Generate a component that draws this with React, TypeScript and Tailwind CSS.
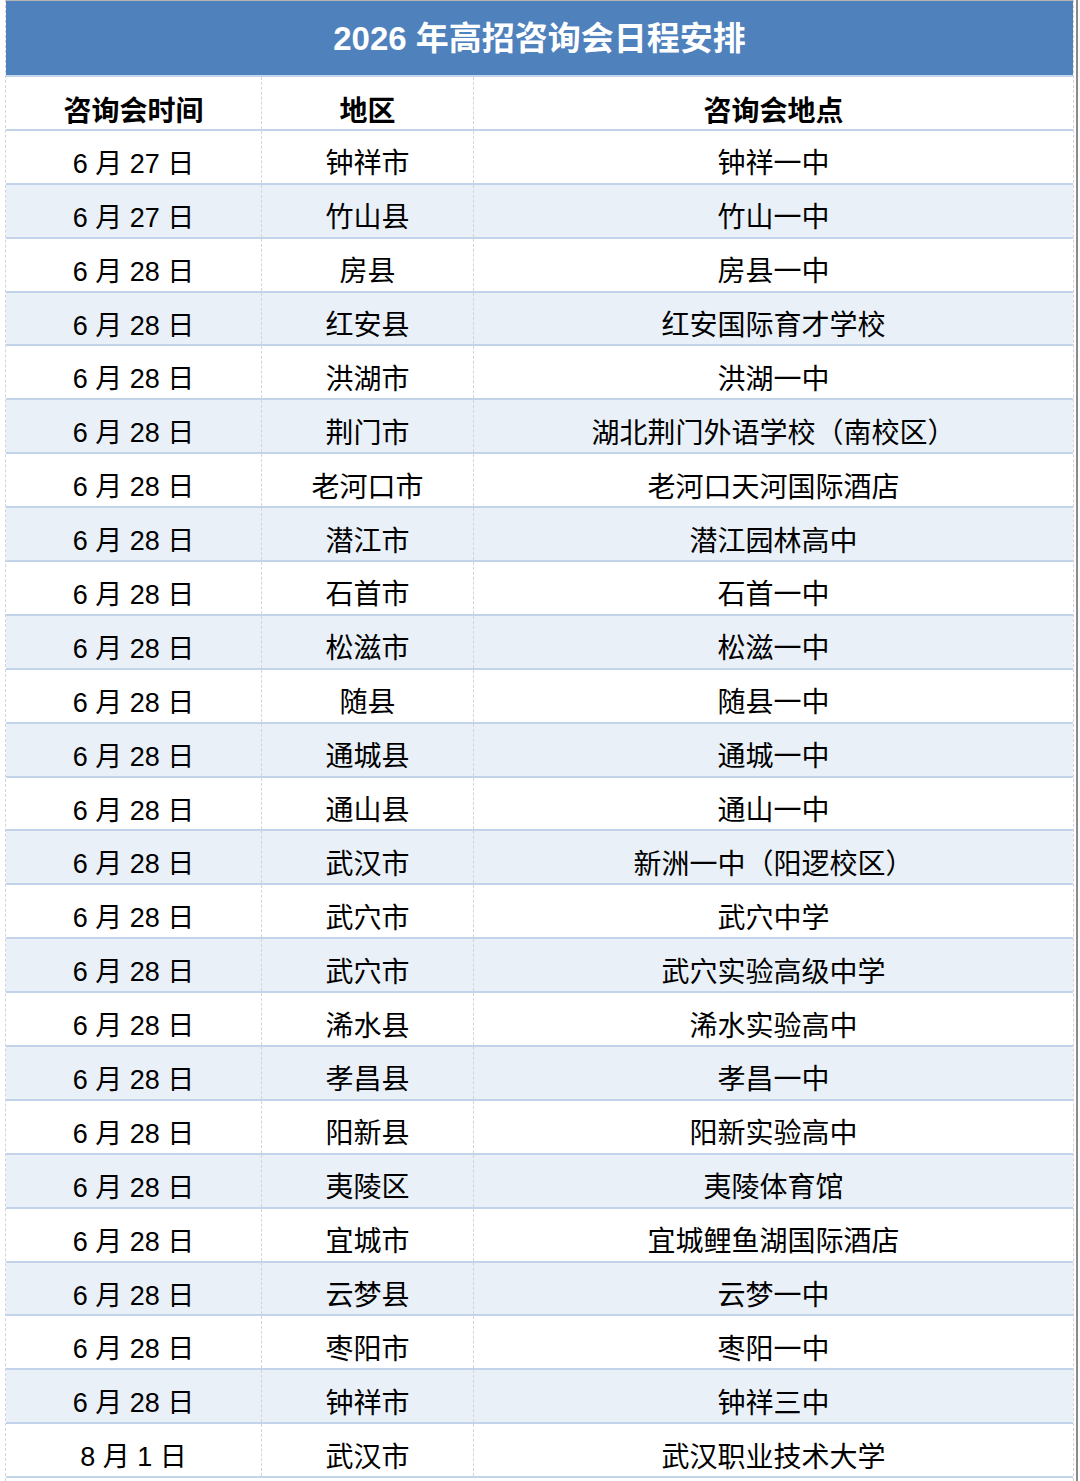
const rows: [string, string, string][] = [
  ['6 月 27 日', '钟祥市', '钟祥一中'],
  ['6 月 27 日', '竹山县', '竹山一中'],
  ['6 月 28 日', '房县', '房县一中'],
  ['6 月 28 日', '红安县', '红安国际育才学校'],
  ['6 月 28 日', '洪湖市', '洪湖一中'],
  ['6 月 28 日', '荆门市', '湖北荆门外语学校（南校区）'],
  ['6 月 28 日', '老河口市', '老河口天河国际酒店'],
  ['6 月 28 日', '潜江市', '潜江园林高中'],
  ['6 月 28 日', '石首市', '石首一中'],
  ['6 月 28 日', '松滋市', '松滋一中'],
  ['6 月 28 日', '随县', '随县一中'],
  ['6 月 28 日', '通城县', '通城一中'],
  ['6 月 28 日', '通山县', '通山一中'],
  ['6 月 28 日', '武汉市', '新洲一中（阳逻校区）'],
  ['6 月 28 日', '武穴市', '武穴中学'],
  ['6 月 28 日', '武穴市', '武穴实验高级中学'],
  ['6 月 28 日', '浠水县', '浠水实验高中'],
  ['6 月 28 日', '孝昌县', '孝昌一中'],
  ['6 月 28 日', '阳新县', '阳新实验高中'],
  ['6 月 28 日', '夷陵区', '夷陵体育馆'],
  ['6 月 28 日', '宜城市', '宜城鲤鱼湖国际酒店'],
  ['6 月 28 日', '云梦县', '云梦一中'],
  ['6 月 28 日', '枣阳市', '枣阳一中'],
  ['6 月 28 日', '钟祥市', '钟祥三中'],
  ['8 月 1 日', '武汉市', '武汉职业技术大学'],
];

const font = "font-['Liberation_Sans','Noto_Sans_CJK_SC',sans-serif]";

function Row({ cells, bold, shaded }: { cells: string[]; bold?: boolean; shaded?: boolean }) {
  return (
    <div
      className={`grid h-[53.9px] grid-cols-[256px_212px_599px] border-b-2 border-[#c3d4ea] ${
        shaded ? 'bg-[#eaf0f8]' : 'bg-white'
      }`}
    >
      {cells.map((c, i) => (
        <div
          key={i}
          className={`flex items-center justify-center leading-none text-black ${
            bold ? 'pt-[18px] text-[28px] font-bold' : i === 0 ? 'pt-[15px] text-[27px]' : 'pt-[15px] text-[28px]'
          } ${i < 2 ? 'border-r border-dashed border-[#d4d4d4]' : ''}`}
        >
          {c}
        </div>
      ))}
    </div>
  );
}

export default function App() {
  return (
    <div className={`${font} flex h-[1481px] w-[1080px] overflow-hidden bg-white`}>
      <div className="w-[6px] border-r border-dashed border-[#d4d4d4]" />
      <div className="flex w-[1067px] flex-col">
        <div className="h-px bg-[#b4b4b4]" />
        <div className="flex h-[74px] items-center justify-center bg-[#4f81bd] pt-[1px] text-[33px] font-bold text-white">
          2026 年高招咨询会日程安排
        </div>
        <div className="h-[2px] bg-[#c6d6ea]" />
        <Row cells={['咨询会时间', '地区', '咨询会地点']} bold />
        {rows.map((r, i) => (
          <Row key={i} cells={r} shaded={i % 2 === 1} />
        ))}
      </div>
      <div className="w-px border-r border-dashed border-[#d4d4d4]" />
      <div className="ml-[2px] w-[2px] bg-[#8a8a8a]" />
    </div>
  );
}
